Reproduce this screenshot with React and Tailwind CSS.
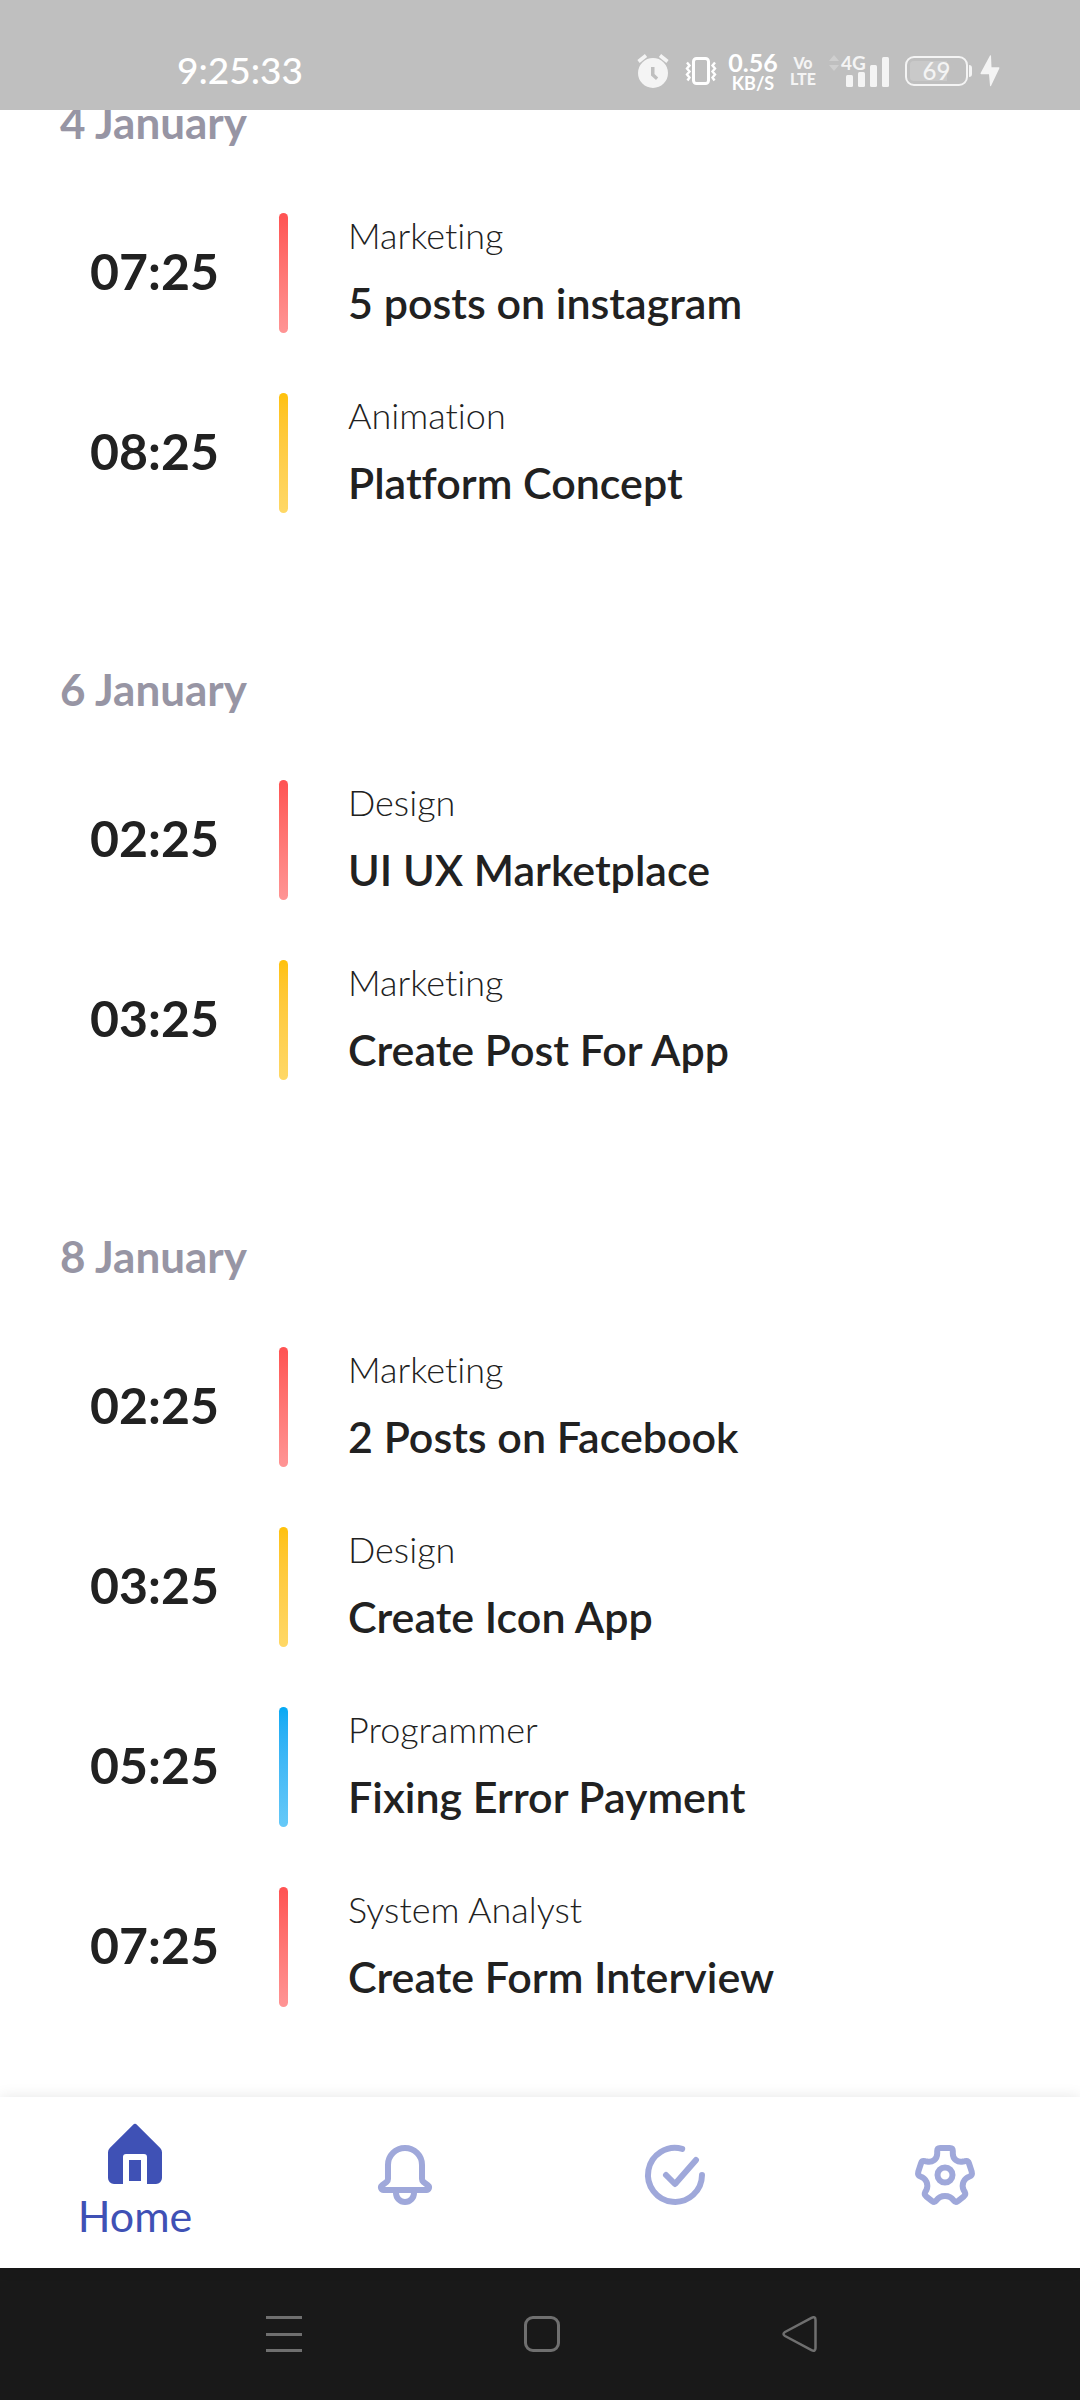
const days = [
  {
    date: "4 January",
    tasks: [
      { time: "07:25", tag: "Marketing", title: "5 posts on instagram", tone: "red" },
      { time: "08:25", tag: "Animation", title: "Platform Concept", tone: "amber" },
    ],
  },
  {
    date: "6 January",
    tasks: [
      { time: "02:25", tag: "Design", title: "UI UX Marketplace", tone: "red" },
      { time: "03:25", tag: "Marketing", title: "Create Post For App", tone: "amber" },
    ],
  },
  {
    date: "8 January",
    tasks: [
      { time: "02:25", tag: "Marketing", title: "2 Posts on Facebook", tone: "red" },
      { time: "03:25", tag: "Design", title: "Create Icon App", tone: "amber" },
      { time: "05:25", tag: "Programmer", title: "Fixing Error Payment", tone: "blue" },
      { time: "07:25", tag: "System Analyst", title: "Create Form Interview", tone: "red" },
    ],
  },
];

const tones = {
  red: "from-[#ff5252] to-[#ff9595]",
  amber: "from-[#ffc107] to-[#ffd866]",
  blue: "from-[#03a9f4] to-[#66c9f8]",
};

function AlarmIcon() {
  return (
    <svg className="h-[34px] w-8" viewBox="0 0 32 34" aria-hidden="true">
      <path
        fill="#f4f4f4"
        fillRule="evenodd"
        d="M16 4a15 15 0 1 1 0 30 15 15 0 0 1 0-30zM14 13v8.500l5 4.500 2.200-2.500L17.500 20v-7z"
      />
      <path d="M1.500 7.500 9 1.500M30.500 7.500 23 1.500" stroke="#f4f4f4" strokeWidth="3.600" fill="none" />
    </svg>
  );
}

function VibrateIcon() {
  return (
    <svg className="h-7 w-8" viewBox="0 0 32 28" fill="none" stroke="#fff" aria-hidden="true">
      <rect x="8.500" y="1.500" width="15" height="25" rx="3" strokeWidth="3" />
      <path d="M2 5.500l2.500 3-2.500 3 2.500 3-2.500 3 2.500 3-2 3M30 5.500l-2.500 3 2.500 3-2.500 3 2.500 3-2.500 3 2 3" strokeWidth="2.400" />
    </svg>
  );
}

function StatusBar() {
  return (
    <header className="flex h-[110px] shrink-0 items-center justify-between bg-[#bfbfbf] pt-8 pr-20 pl-[177px] text-white">
      <span className="pb-0.5 text-[37px] leading-10 font-medium">9:25:33</span>
      <div className="flex items-center">
        <AlarmIcon />
        <span className="ml-4">
          <VibrateIcon />
        </span>
        <span className="ml-2 flex w-14 flex-col items-center">
          <span className="text-[25px] leading-6 font-bold">0.56</span>
          <span className="text-[18px] leading-[18px] font-bold">KB/S</span>
        </span>
        <span className="ml-2 flex w-7 flex-col items-center text-[16px] leading-4 font-black text-[#f4f4f4]">
          <span>Vo</span>
          <span>LTE</span>
        </span>
        <span className="relative ml-3 h-8 w-[60px]">
          <svg className="h-8 w-[60px]" viewBox="0 0 60 32" fill="#f4f4f4" aria-hidden="true">
            <path d="M0 6l5-6 5 6zM0 10l5 6 5-6z" fill="#cfcfcf" />
            <rect x="17" y="20" width="7" height="12" rx="1.500" />
            <rect x="29" y="17" width="7" height="15" rx="1.500" />
            <rect x="41" y="10" width="7" height="22" rx="1.500" />
            <rect x="53" y="2" width="7" height="30" rx="1.500" />
          </svg>
          <span className="absolute top-0 left-3 text-[19px] leading-4 font-bold text-[#f4f4f4]">4G</span>
        </span>
        <span className="ml-4 flex items-center">
          <span className="flex h-[30px] w-[63px] items-center justify-center rounded-[9px] border-2 border-[#f4f4f4] p-[3px]">
            <span className="flex h-full w-full items-center justify-center rounded-[4px] bg-linear-to-r from-[#c9c9c9] from-70% to-[#bfbfbf] to-70% text-[24px] leading-5 font-medium text-[#f4f4f4]">
              69
            </span>
          </span>
          <span className="ml-px h-3 w-[3px] rounded-r bg-[#f4f4f4]" />
        </span>
        <svg className="ml-2 h-8 w-5" viewBox="0 0 20 32" fill="#f4f4f4" aria-hidden="true">
          <path d="M10 .5.600 18c-.3.700 0 1.200.800 1.200H9l1 11.500c.1.800.8.700 1.100.1L19.300 13.500c.3-.700 0-1.200-.8-1.200H11.500L11 .8c-.1-.7-.7-.8-1-.3z" />
        </svg>
      </div>
    </header>
  );
}

function Task({ time, tag, title, tone }) {
  return (
    <li className="flex h-[120px]">
      <time className="flex w-[189px] items-center pb-1 text-[50px] leading-[60px] font-bold">{time}</time>
      <span className={"h-full w-[9px] shrink-0 rounded-full bg-linear-to-b " + tones[tone]} />
      <div className="ml-[60px] min-w-0">
        <p className="text-[36px] leading-[44px] font-light">{tag}</p>
        <h3 className="mt-5 text-[43px] leading-[52px] font-semibold">{title}</h3>
      </div>
    </li>
  );
}

function HomeIcon() {
  return (
    <svg className="size-[72px]" viewBox="0 0 24 24" fill="currentColor" aria-hidden="true">
      <path d="M11.300 2.300a1 1 0 0 1 1.400 0l7.700 7.700a2 2 0 0 1 .6 1.400V20a2 2 0 0 1-2 2h-3v-9a1 1 0 0 0-1-1H9a1 1 0 0 0-1 1v9H5a2 2 0 0 1-2-2v-8.600a2 2 0 0 1 .6-1.400zM10 14h4v7h-4z" />
    </svg>
  );
}

function LineIcon({ children }) {
  return (
    <svg
      className="size-[72px]"
      viewBox="0 0 24 24"
      fill="none"
      stroke="currentColor"
      strokeWidth="2"
      strokeLinecap="round"
      strokeLinejoin="round"
      aria-hidden="true"
    >
      {children}
    </svg>
  );
}

function BottomNav() {
  const item = "flex flex-col items-center justify-center text-[#9fa8da]";
  return (
    <nav className="relative grid h-[171px] shrink-0 grid-cols-4 bg-white pb-[15px] shadow-[0_0_14px_rgba(0,0,0,0.1)]">
      <button type="button" className="flex flex-col items-center justify-center pt-1.5 text-[#3f51b5]">
        <HomeIcon />
        <span className="mt-1 text-[43px] leading-[44px]">Home</span>
      </button>
      <button type="button" aria-label="Notifications" className={item}>
        <LineIcon>
          <path d="M12 3a5.670 5.670 0 0 0-5.670 5.670V13.300c0 .4-.15.700-.45 1L4.300 15.500a.85.85 0 0 0 .6 1.500h14.200a.85.85 0 0 0 .6-1.500l-1.580-1.200c-.3-.3-.45-.6-.45-1V8.670A5.670 5.670 0 0 0 12 3z" />
          <path d="M9 17.500V18a3 3 0 0 0 6 0v-.5" />
        </LineIcon>
      </button>
      <button type="button" aria-label="Completed" className={item}>
        <LineIcon>
          <path d="M14.400 3.300A9 9 0 1 0 21 12" />
          <path d="M9 12l3 3 7-8" />
        </LineIcon>
      </button>
      <button type="button" aria-label="Settings" className={item}>
        <LineIcon>
          <path d="M10.400 3H13.600Q14.600 3 14.600 4V4.800C14.600 6.700 16.200 7.900 18 7.500L18.600 7.400Q19.700 7.100 20 8.100L20.900 10.900Q21.200 12.100 20.200 12.500C18.200 13.100 17.400 15.200 18.200 17L18.600 17.700Q19 18.500 18.300 19.100L16.300 20.700Q15.500 21.300 14.900 20.500C13.500 18.500 10.500 18.500 9.100 20.500Q8.500 21.300 7.700 20.700L5.700 19.100Q5 18.500 5.400 17.700L5.800 17C6.600 15.200 5.800 13.100 3.800 12.500Q2.800 12.100 3.100 10.900L4 8.100Q4.300 7.100 5.400 7.400L6 7.500C7.800 7.900 9.400 6.700 9.400 4.800V4Q9.400 3 10.400 3Z" />
          <circle cx="12" cy="12" r="2.500" />
        </LineIcon>
      </button>
    </nav>
  );
}

function SystemBar() {
  return (
    <footer className="flex h-[132px] shrink-0 items-center justify-center gap-[222px] bg-[#191919] pl-1">
      <button type="button" aria-label="Recent apps" className="flex h-9 w-9 flex-col justify-between">
        <span className="h-[3px] w-full bg-[#6f6f6f]" />
        <span className="h-[3px] w-full bg-[#6f6f6f]" />
        <span className="h-[3px] w-full bg-[#6f6f6f]" />
      </button>
      <button
        type="button"
        aria-label="Home screen"
        className="h-9 w-9 rounded-[9px] border-[3px] border-[#6f6f6f]"
      />
      <button type="button" aria-label="Back" className="h-9 w-9">
        <svg
          className="size-9"
          viewBox="0 0 36 36"
          fill="none"
          stroke="#6f6f6f"
          strokeWidth="2.500"
          strokeLinejoin="round"
          aria-hidden="true"
        >
          <path d="M3 16 29.500 1.800Q33.500 0 33.500 4V32Q33.500 36 29.500 34.200L3 20Q0 18 3 16Z" />
        </svg>
      </button>
    </footer>
  );
}

export default function App() {
  return (
    <div className="flex h-screen flex-col bg-white font-['Lato','Open_Sans',sans-serif] text-[#212121] [font-variant-ligatures:none]">
      <StatusBar />
      <main className="flex min-h-0 flex-1 flex-col justify-end gap-[150px] overflow-hidden px-[60px] pb-[90px]">
        {days.map((day) => (
          <section key={day.date}>
            <h2 className="text-[44px] leading-[52px] font-bold text-[#9795a4]">{day.date}</h2>
            <ul className="mt-[65px] flex flex-col gap-[60px] pl-[30px]">
              {day.tasks.map((task) => (
                <Task key={task.time + task.title} {...task} />
              ))}
            </ul>
          </section>
        ))}
      </main>
      <BottomNav />
      <SystemBar />
    </div>
  );
}
